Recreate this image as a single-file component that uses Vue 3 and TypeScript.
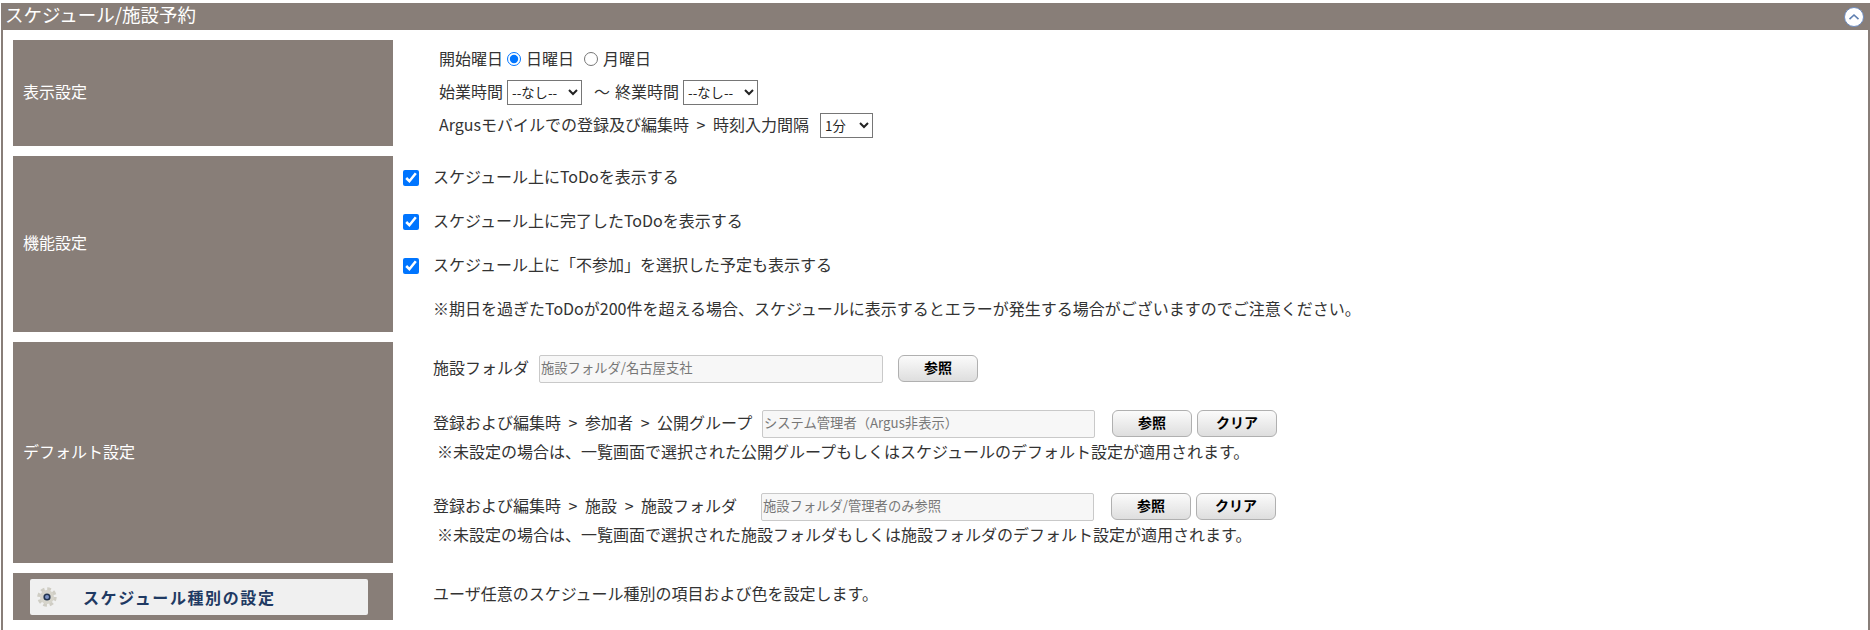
<script setup lang="ts">
const checks: string[] = [
  'スケジュール上にToDoを表示する',
  'スケジュール上に完了したToDoを表示する',
  'スケジュール上に「不参加」を選択した予定も表示する',
]
</script>

<template>
  <div class="panel">
    <header class="title">
      <span class="title-text">スケジュール/施設予約</span>
      <button class="collapse" type="button" aria-label="折りたたむ">
        <svg width="12" height="8" viewBox="0 0 12 8"><path d="M1.5 6.2 6 2l4.5 4.2" fill="none" stroke="#5f7fb0" stroke-width="1.6" /></svg>
      </button>
    </header>
    <div class="body">
      <section class="row r1">
        <div class="label">表示設定</div>
        <div class="content c1">
          <div class="line">
            <span>開始曜日</span>
            <input class="radio" type="radio" name="w" checked />
            <span>日曜日</span>
            <input class="radio r2" type="radio" name="w" />
            <span>月曜日</span>
          </div>
          <div class="line">
            <span>始業時間</span>
            <select class="sel"><option>--なし--</option></select>
            <span class="tilde">〜</span>
            <span>終業時間</span>
            <select class="sel"><option>--なし--</option></select>
          </div>
          <div class="line">
            <span class="spaced">Argusモバイルでの登録及び編集時 &gt; 時刻入力間隔</span>
            <select class="sel small"><option>1分</option></select>
          </div>
        </div>
      </section>

      <section class="row r2row">
        <div class="label">機能設定</div>
        <div class="content c2">
          <label v-for="c in checks" :key="c" class="check">
            <input type="checkbox" checked />
            <span>{{ c }}</span>
          </label>
          <p class="caution">※期日を過ぎたToDoが200件を超える場合、スケジュールに表示するとエラーが発生する場合がございますのでご注意ください。</p>
        </div>
      </section>

      <section class="row r3">
        <div class="label">デフォルト設定</div>
        <div class="content c3">
          <div class="field first">
            <span class="fl w1">施設フォルダ</span>
            <input class="text t1" readonly value="施設フォルダ/名古屋支社" />
            <button class="btn b1" type="button">参照</button>
          </div>
          <div class="field">
            <span class="fl w2">登録および編集時 &gt; 参加者 &gt; 公開グループ</span>
            <input class="text t2" readonly value="システム管理者（Argus非表示）" />
            <button class="btn b2" type="button">参照</button>
            <button class="btn b3" type="button">クリア</button>
          </div>
          <p class="note">※未設定の場合は、一覧画面で選択された公開グループもしくはスケジュールのデフォルト設定が適用されます。</p>
          <div class="field">
            <span class="fl w3">登録および編集時 &gt; 施設 &gt; 施設フォルダ</span>
            <input class="text t2" readonly value="施設フォルダ/管理者のみ参照" />
            <button class="btn b2" type="button">参照</button>
            <button class="btn b3" type="button">クリア</button>
          </div>
          <p class="note">※未設定の場合は、一覧画面で選択された施設フォルダもしくは施設フォルダのデフォルト設定が適用されます。</p>
        </div>
      </section>

      <section class="row r4">
        <div class="label lbtn">
          <a class="type-btn">
            <svg class="gear" width="20" height="20" viewBox="0 0 20 20">
              <circle cx="10" cy="10" r="8" fill="none" stroke="#cfcdc4" stroke-width="3.4" stroke-dasharray="3.6 2.68" />
              <circle cx="10" cy="10" r="7" fill="#d6d4cb" />
              <circle cx="10" cy="10" r="3.6" fill="#23344f" />
              <circle cx="10" cy="10" r="2" fill="#7d93c4" />
            </svg>
            <span>スケジュール種別の設定</span>
          </a>
        </div>
        <div class="content c4">ユーザ任意のスケジュール種別の項目および色を設定します。</div>
      </section>
    </div>
  </div>
</template>

<style>
html, body { margin: 0; background: #fff; }
</style>

<style scoped>
.panel {
  width: 1870px;
  height: 630px;
  box-sizing: border-box;
  padding-top: 3px;
  font-family: "Noto Sans CJK JP", "Noto Sans", sans-serif;
  font-size: 16px;
  color: #333;
  display: flex;
  flex-direction: column;
  overflow: hidden;
}
.title {
  height: 27px;
  margin-left: 1px;
  flex: none;
  background: #887e78;
  color: #fff;
  font-size: 18.5px;
  line-height: 27px;
  padding-left: 4px;
  padding-right: 6px;
  display: flex;
  align-items: center;
  justify-content: space-between;
}
.title-text { padding-bottom: 4px; line-height: 23px; }
.collapse {
  width: 20px;
  height: 20px;
  padding: 0;
  border: 1px solid #6d8cc0;
  border-radius: 50%;
  background: #fff;
  display: flex;
  align-items: center;
  justify-content: center;
}
.body {
  flex: 1;
  margin-left: 1px;
  border-left: 2px solid #887e78;
  border-right: 2px solid #887e78;
  padding: 10px 0 0 10px;
  display: flex;
  flex-direction: column;
  gap: 10px;
}
.row {
  display: grid;
  grid-template-columns: 380px 1fr;
  flex: none;
}
.r1 { height: 106px; }
.r2row { height: 176px; }
.r3 { height: 221px; }
.r4 { height: 47px; }
.label {
  background: #887e78;
  color: #fff;
  padding-left: 10px;
  padding-bottom: 4px;
  box-sizing: border-box;
  display: flex;
  align-items: center;
}
.content { min-width: 0; }
.c1 {
  padding-left: 46px;
  display: flex;
  flex-direction: column;
  justify-content: center;
}
.line {
  box-sizing: border-box;
  height: 33px;
  padding-bottom: 2px;
  display: flex;
  align-items: center;
}
.line span { padding-bottom: 2px; }
.spaced { word-spacing: 4px; }
.radio { width: 14px; height: 14px; margin: 0 5px 0 4px; }
.radio.r2 { margin-left: 10px; }
.sel {
  width: 75px;
  height: 25px;
  margin-left: 4px;
  font-family: inherit;
  font-size: 13.33px;
  background: #fff;
  color: #222;
}
.sel.small { width: 53px; margin-left: 11px; }
.tilde { margin: 0 5px 0 12px; }
.c2 { padding-left: 10px; }
.check, .caution {
  box-sizing: border-box;
  height: 44px;
  margin: 0;
  display: flex;
  align-items: center;
}
.check { padding-bottom: 1px; }
.check span { padding-bottom: 3px; }
.check input { width: 16px; height: 16px; margin: 0 14px 0 0; }
.caution { padding-left: 30px; padding-bottom: 5px; }
.c3 { padding: 13px 0 0 40px; }
.field {
  height: 28px;
  margin-top: 27px;
  display: flex;
  align-items: flex-start;
}
.field.first { margin-top: 0; }
.fl { line-height: 24px; white-space: nowrap; word-spacing: 4px; }
.w1 { width: 106px; }
.w2 { width: 329px; }
.w3 { width: 328px; }
.text {
  box-sizing: border-box;
  height: 28px;
  padding: 0 1px 4px;
  border: 1px solid #c9c9c9;
  border-radius: 2px;
  background: #f7f7f7;
  color: #777;
  font-family: inherit;
  font-size: 13.3px;
  outline: none;
}
.t1 { width: 344px; }
.t2 { width: 333px; }
.btn {
  box-sizing: border-box;
  width: 80px;
  height: 27px;
  padding: 0 0 3px;
  border: 1px solid #b0b0b0;
  border-radius: 6px;
  background: linear-gradient(#fbfbfb, #dedede);
  color: #000;
  font-family: inherit;
  font-size: 14px;
  font-weight: 700;
}
.b1 { margin-left: 15px; }
.b2 { margin-left: 17px; }
.b3 { margin-left: 5px; }
.note {
  margin: 0;
  height: 28px;
  line-height: 26px;
  padding-left: 4px;
}
.lbtn { padding-left: 17px; padding-bottom: 0; }
.type-btn {
  box-sizing: border-box;
  width: 338px;
  height: 36px;
  padding-left: 7px;
  background: #f0f0f0;
  border-radius: 2px;
  display: flex;
  align-items: center;
  color: #1f3a63;
  font-size: 16px;
  font-weight: 700;
  letter-spacing: 1.6px;
}
.gear { flex: none; margin-right: 26px; }
.c4 { padding: 6px 0 0 40px; line-height: 28px; }
</style>
